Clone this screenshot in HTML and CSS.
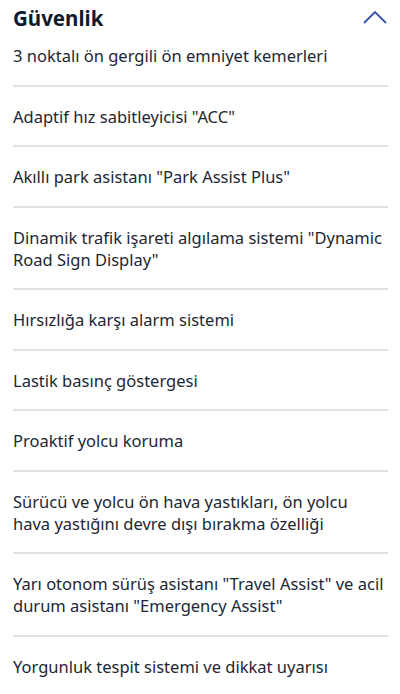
FILE: index.html
```html
<!DOCTYPE html>
<html lang="tr">
<head>
<meta charset="utf-8">
<link rel="stylesheet" href="styles.css">
</head>
<body>
<section class="panel">
  <header class="panel-head">
    <h2 class="panel-title">Güvenlik</h2>
    <svg class="chevron" width="24" height="14" viewBox="0 0 24 14"><path d="M1 13 L12 2 L23 13" fill="none" stroke="#2f54b3" stroke-width="1.8"/></svg>
  </header>
  <ul class="items">
    <li class="item">3 noktalı ön gergili ön emniyet kemerleri</li>
    <li class="item">Adaptif hız sabitleyicisi "ACC"</li>
    <li class="item">Akıllı park asistanı "Park Assist Plus"</li>
    <li class="item">Dinamik trafik işareti algılama sistemi "Dynamic Road Sign Display"</li>
    <li class="item">Hırsızlığa karşı alarm sistemi</li>
    <li class="item">Lastik basınç göstergesi</li>
    <li class="item">Proaktif yolcu koruma</li>
    <li class="item">Sürücü ve yolcu ön hava yastıkları, ön yolcu hava yastığını devre dışı bırakma özelliği</li>
    <li class="item">Yarı otonom sürüş asistanı "Travel Assist" ve acil durum asistanı "Emergency Assist"</li>
    <li class="item">Yorgunluk tespit sistemi ve dikkat uyarısı</li>
  </ul>
</section>
</body>
</html>
```
FILE: styles.css
```css
html, body {
  margin: 0;
  padding: 0;
  background: #ffffff;
}
body {
  font-family: "Noto Sans", "Open Sans", sans-serif;
  color: #1c2733;
}
.panel {
  padding: 0 12px 0 13px;
}
.panel-head {
  display: flex;
  align-items: center;
  justify-content: space-between;
  height: 34px;
  padding-top: 1px;
}
.panel-title {
  margin: 0;
  font-size: 20.5px;
  font-weight: 700;
  line-height: 28px;
  color: #0f1b2d;
}
.chevron {
  margin-right: 1px;
  margin-top: -3px;
}
.items {
  list-style: none;
  margin: 0;
  padding: 0;
}
.item {
  font-size: 16.5px;
  line-height: 22px;
  padding: 19px 0 17.5px;
  border-bottom: 2px solid #dfe3e8;
}
.item:first-child {
  padding-top: 10px;
}
```
